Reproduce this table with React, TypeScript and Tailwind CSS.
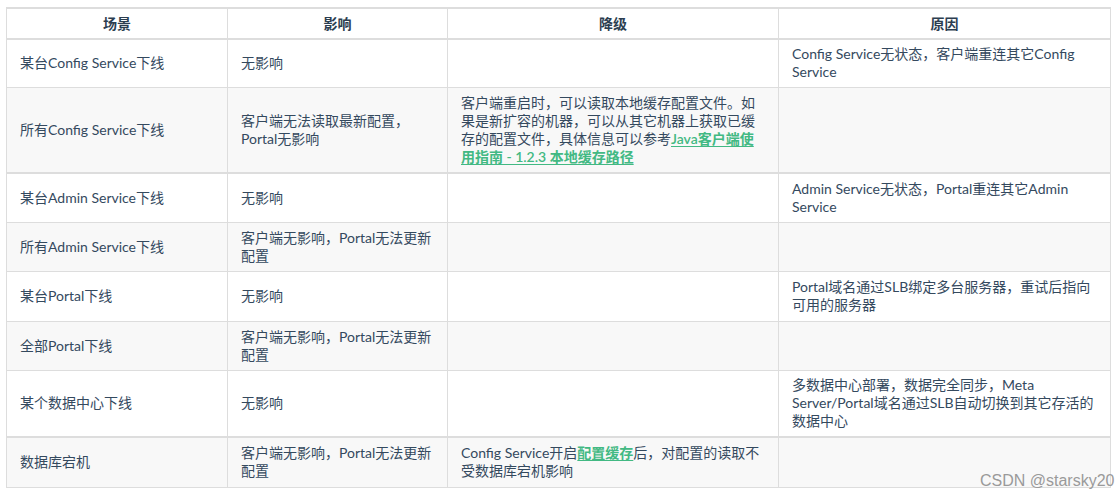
import React from 'react';

type Row = {
  scene: React.ReactNode;
  impact: React.ReactNode;
  fallback: React.ReactNode;
  reason: React.ReactNode;
  h: string;
  thick?: boolean;
};

const Link = ({ children }: { children: React.ReactNode }) => (
  <span className="font-semibold text-[#42b983] underline decoration-[#42b983] underline-offset-2">
    {children}
  </span>
);

const ROWS: Row[] = [
  {
    scene: '某台Config Service下线',
    impact: '无影响',
    fallback: '',
    reason: (
      <>
        Config Service无状态，客户端重连其它Config
        <br />
        Service
      </>
    ),
    h: 'h-[48px]',
  },
  {
    scene: '所有Config Service下线',
    impact: (
      <>
        客户端无法读取最新配置，
        <br />
        Portal无影响
      </>
    ),
    fallback: (
      <>
        客户端重启时，可以读取本地缓存配置文件。如
        <br />
        果是新扩容的机器，可以从其它机器上获取已缓
        <br />
        存的配置文件，具体信息可以参考<Link>Java客户端使</Link>
        <br />
        <Link>用指南 - 1.2.3 本地缓存路径</Link>
      </>
    ),
    reason: '',
    h: 'h-[86px]',
    thick: true,
  },
  {
    scene: '某台Admin Service下线',
    impact: '无影响',
    fallback: '',
    reason: (
      <>
        Admin Service无状态，Portal重连其它Admin
        <br />
        Service
      </>
    ),
    h: 'h-[49px]',
  },
  {
    scene: '所有Admin Service下线',
    impact: (
      <>
        客户端无影响，Portal无法更新
        <br />
        配置
      </>
    ),
    fallback: '',
    reason: '',
    h: 'h-[49px]',
  },
  {
    scene: '某台Portal下线',
    impact: '无影响',
    fallback: '',
    reason: (
      <>
        Portal域名通过SLB绑定多台服务器，重试后指向
        <br />
        可用的服务器
      </>
    ),
    h: 'h-[50px]',
  },
  {
    scene: '全部Portal下线',
    impact: (
      <>
        客户端无影响，Portal无法更新
        <br />
        配置
      </>
    ),
    fallback: '',
    reason: '',
    h: 'h-[49px]',
  },
  {
    scene: '某个数据中心下线',
    impact: '无影响',
    fallback: '',
    reason: (
      <>
        多数据中心部署，数据完全同步，Meta
        <br />
        Server/Portal域名通过SLB自动切换到其它存活的
        <br />
        数据中心
      </>
    ),
    h: 'h-[67px]',
    thick: true,
  },
  {
    scene: '数据库宕机',
    impact: (
      <>
        客户端无影响，Portal无法更新
        <br />
        配置
      </>
    ),
    fallback: (
      <>
        Config Service开启<Link>配置缓存</Link>后，对配置的读取不
        <br />
        受数据库宕机影响
      </>
    ),
    reason: '',
    h: 'h-[50px]',
  },
];

export default function App() {
  return (
    <div
      className="relative w-[1117px] h-[500px] bg-white overflow-hidden"
      style={{ fontFamily: "Lato, 'Noto Sans CJK SC', sans-serif" }}
    >
      <table className="ml-[6px] mt-[7px] w-[1104px] table-fixed border-collapse text-[14px] leading-[18px] text-[#34495e]">
        <colgroup>
          <col className="w-[221px]" />
          <col className="w-[220px]" />
          <col className="w-[331px]" />
          <col className="w-[332px]" />
        </colgroup>
        <thead>
          <tr className="h-[31px] bg-white">
            {['场景', '影响', '降级', '原因'].map((t) => (
              <th
                key={t}
                className="border border-[#dddddd] border-t-2 border-b-2 px-[13px] py-[5px] text-center font-bold text-[#2c3e50]"
              >
                {t}
              </th>
            ))}
          </tr>
        </thead>
        <tbody>
          {ROWS.map((r, i) => (
            <tr key={i} className={`${r.h} ${i % 2 === 1 ? 'bg-[#f8f8f8]' : 'bg-white'}`}>
              {[r.scene, r.impact, r.fallback, r.reason].map((c, j) => (
                <td
                  key={j}
                  className={`border border-[#dddddd] ${r.thick ? 'border-b-2' : ''} px-[13px] py-[5px] align-middle whitespace-nowrap`}
                >
                  {c}
                </td>
              ))}
            </tr>
          ))}
        </tbody>
      </table>

      {/* watermark */}
      <div
        className="absolute left-[980px] top-[471px] text-[16px] leading-[20px] text-[#9a9a9a]"
        style={{ fontFamily: "'Liberation Sans', sans-serif" }}
      >
        CSDN @starsky20
      </div>
    </div>
  );
}
